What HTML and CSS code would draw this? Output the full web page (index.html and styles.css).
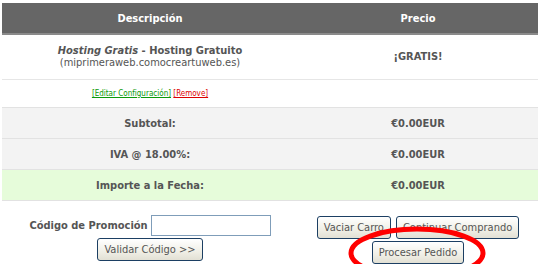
FILE: index.html
```html
<!DOCTYPE html>
<html lang="es">
<head>
  <meta charset="UTF-8" />
  <title>Carrito de Compras</title>
  <link rel="stylesheet" href="styles.css">
</head>
<body>

<div class="cart">
  <table class="cart-table">
    <tr class="head">
      <th class="col-desc">Descripción</th>
      <th class="col-price">Precio</th>
    </tr>
    <tr class="item">
      <td>
        <strong><em>Hosting Gratis</em> - Hosting Gratuito</strong><br>
        (miprimeraweb.comocreartuweb.es)
      </td>
      <td class="strong">¡GRATIS!</td>
    </tr>
    <tr class="item-links">
      <td>
        <a href="#" class="edit">[Editar Configuración]</a>
        <a href="#" class="remove">[Remove]</a>
      </td>
      <td></td>
    </tr>
    <tr class="subtotal">
      <td>Subtotal:</td>
      <td>€0.00EUR</td>
    </tr>
    <tr class="subtotal">
      <td>IVA @ 18.00%:</td>
      <td>€0.00EUR</td>
    </tr>
    <tr class="subtotal due">
      <td>Importe a la Fecha:</td>
      <td>€0.00EUR</td>
    </tr>
  </table>

  <!-- Promo code and cart buttons -->
  <div class="cart-foot">
    <div class="promo">
      <div class="promo-line">
        <label for="promocode">Código de Promoción</label>
        <input type="text" id="promocode" />
      </div>
      <button>Validar Código &gt;&gt;</button>
    </div>
    <div class="actions">
      <div class="actions-line">
        <button>Vaciar Carro</button>
        <button>Continuar Comprando</button>
      </div>
      <button>Procesar Pedido</button>
    </div>
  </div>

  <!-- hand drawn highlight -->
  <svg class="highlight" width="150" height="60" viewBox="0 0 150 60">
    <ellipse cx="69" cy="28" rx="66" ry="24" fill="none" stroke="#ff0000" stroke-width="5" />
  </svg>
</div>

</body>
</html>
```

FILE: styles.css
```css
body {
  margin: 0;
  padding: 3px 0 0 2px;
  font-family: "DejaVu Sans Condensed", "DejaVu Sans", sans-serif;
  font-size: 11px;
  color: #555;
  background: #fff;
}
.cart {
  position: relative;
  width: 536px;
}
.cart-table {
  width: 536px;
  border-collapse: collapse;
  text-align: center;
}
.cart-table th {
  background: #666;
  color: #fff;
  font-weight: bold;
  height: 30px;
  padding: 0;
  border-bottom: 2px solid #8a8a8a;
}
.col-desc {
  width: 296px;
}
.cart-table td {
  padding: 0;
}
.item td {
  height: 44px;
  line-height: 12px;
  border-bottom: 1px solid #e6e6e6;
}
.item .strong {
  font-weight: bold;
}
.item-links td {
  height: 27px;
  font-size: 8px;
  vertical-align: middle;
}
.item-links a {
  text-decoration: underline;
}
.item-links .edit {
  color: #0a9a0a;
}
.item-links .remove {
  color: #d00;
}
.subtotal td {
  background: #f3f3f3;
  height: 30px;
  font-weight: bold;
  border-top: 1px solid #e2e2e2;
}
.subtotal.due td {
  background: #e6fcda;
  border-bottom: 1px solid #e2e2e2;
}

/* Footer */
.cart-foot {
  display: flex;
  padding-top: 14px;
}
.promo {
  width: 296px;
  display: flex;
  flex-direction: column;
  align-items: center;
  gap: 2px;
}
.promo-line {
  display: flex;
  align-items: center;
  gap: 3px;
}
.promo label {
  font-weight: bold;
}
.promo input {
  width: 118px;
  height: 19px;
  border: 1px solid #7f9db9;
  padding: 0;
  margin: 0;
}
.actions {
  width: 240px;
  display: flex;
  flex-direction: column;
  align-items: center;
  gap: 2px;
  padding-top: 1px;
}
.actions-line {
  display: flex;
  gap: 5px;
}
.cart-foot button {
  font-family: "DejaVu Sans Condensed", "DejaVu Sans", sans-serif;
  font-size: 11px;
  color: #555;
  height: 23px;
  padding: 0 6px;
  border: 1px solid #1c3f63;
  border-radius: 3px;
  background: linear-gradient(#ffffff, #f0efe6 60%, #e2e0d4);
  cursor: pointer;
}
.highlight {
  position: absolute;
  left: 346px;
  top: 222px;
}
```
